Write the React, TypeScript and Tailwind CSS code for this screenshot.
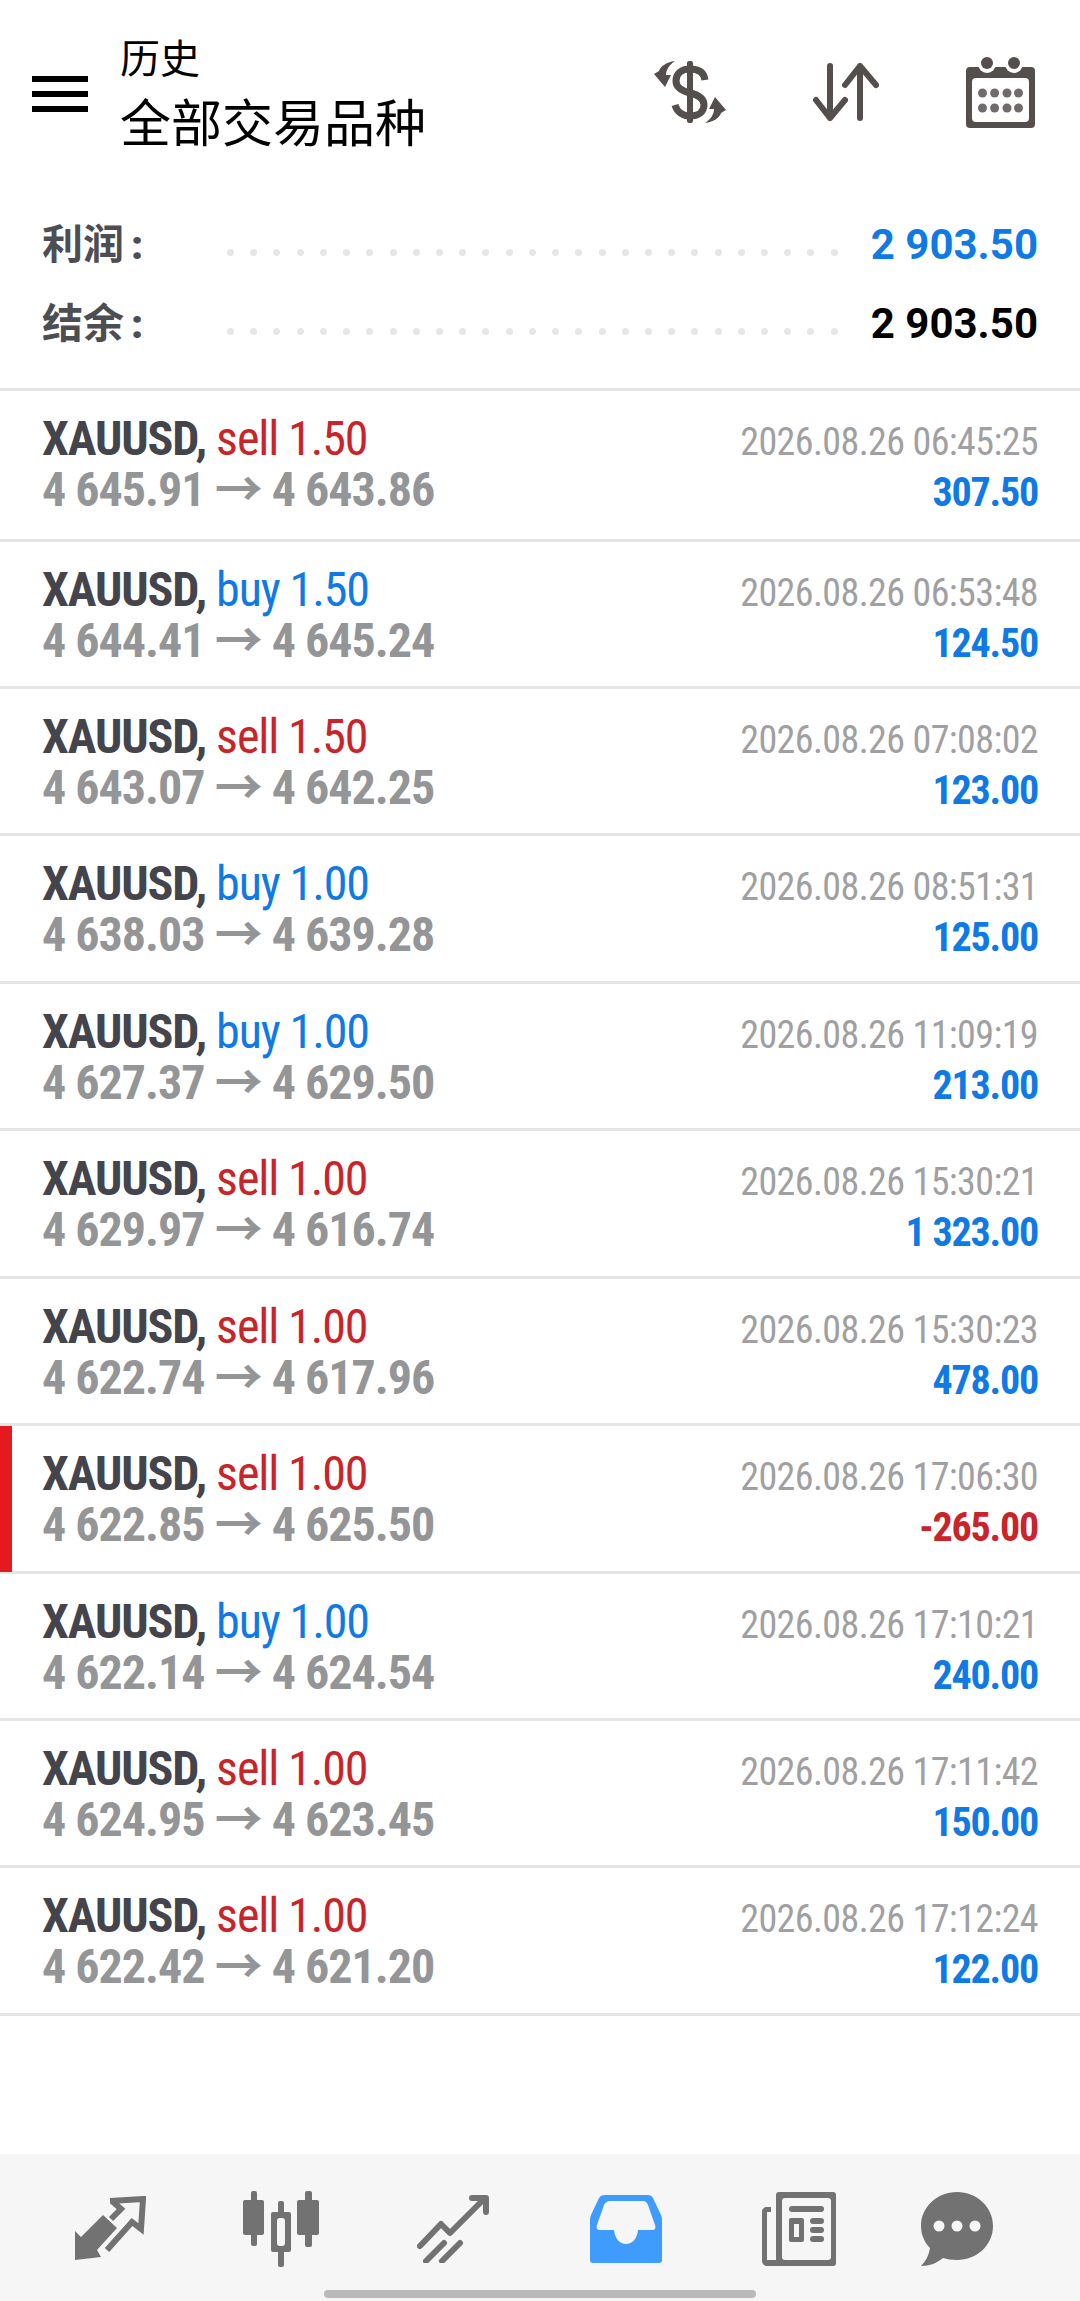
import React from 'react';

const trades = [
  ['sell 1.50', '4 645.91', '4 643.86', '2026.08.26 06:45:25', '307.50'],
  ['buy 1.50', '4 644.41', '4 645.24', '2026.08.26 06:53:48', '124.50'],
  ['sell 1.50', '4 643.07', '4 642.25', '2026.08.26 07:08:02', '123.00'],
  ['buy 1.00', '4 638.03', '4 639.28', '2026.08.26 08:51:31', '125.00'],
  ['buy 1.00', '4 627.37', '4 629.50', '2026.08.26 11:09:19', '213.00'],
  ['sell 1.00', '4 629.97', '4 616.74', '2026.08.26 15:30:21', '1 323.00'],
  ['sell 1.00', '4 622.74', '4 617.96', '2026.08.26 15:30:23', '478.00'],
  ['sell 1.00', '4 622.85', '4 625.50', '2026.08.26 17:06:30', '-265.00'],
  ['buy 1.00', '4 622.14', '4 624.54', '2026.08.26 17:10:21', '240.00'],
  ['sell 1.00', '4 624.95', '4 623.45', '2026.08.26 17:11:42', '150.00'],
  ['sell 1.00', '4 622.42', '4 621.20', '2026.08.26 17:12:24', '122.00'],
];

const SummaryRow: React.FC<{ label: string; value: string; color: string }> = ({ label, value, color }) => (
  <div className="flex items-start h-[79px]">
    <span className="w-[185px] text-[41px] leading-[50px] font-bold text-[#4d4e53] whitespace-pre">
      {label}<span className="ml-[7px] font-black">:</span>
    </span>
    <div className="flex-1 flex justify-between mt-[29px] mr-[33px]">
      {Array.from({ length: 27 }).map((_, i) => (
        <span key={i} className="w-[7px] h-[7px] rounded-full bg-[#e6e6e6]" />
      ))}
    </div>
    <span className={`text-[42px] leading-[50px] font-bold [font-stretch:90%] whitespace-pre ${color}`}>{value}</span>
  </div>
);

const Row: React.FC<{ t: string[]; first: boolean }> = ({ t, first }) => {
  const isSell = t[0].startsWith('sell');
  const loss = t[4].startsWith('-');
  return (
    <div className={`relative border-b-[3px] border-[#e5e5e5] px-[42px] flex justify-between ${first ? 'h-[150.5px]' : 'h-[147.45px]'}`}>
      {loss && <div className="absolute left-0 top-0 bottom-[-1px] w-[12px] bg-[#e31b1f]" />}
      <div className="pt-[22px]">
        <div className="text-[48px] leading-[51px] tracking-[-1.1px] [font-stretch:75%] whitespace-pre">
          <span className="font-bold text-[#44454c]">XAUUSD, </span>
          <span className={isSell ? 'text-[#c9242a]' : 'text-[#0f7ae6]'}>{t[0]}</span>
        </div>
        <div className="text-[48px] leading-[51px] tracking-[-1px] font-bold text-[#949597] [font-stretch:75%] whitespace-pre">
          {t[1]} → {t[2]}
        </div>
      </div>
      <div className="pt-[29px] text-right">
        <div className="text-[38px] leading-[44px] tracking-[-0.6px] text-[#a0a0a2] [font-stretch:75%] whitespace-pre">{t[3]}</div>
        <div className={`text-[40px] leading-[58px] tracking-[-1.2px] font-bold [font-stretch:75%] whitespace-pre ${loss ? 'text-[#c9242a]' : 'text-[#0f7ae6]'}`}>{t[4]}</div>
      </div>
    </div>
  );
};

export default function App() {
  return (
    <div className="relative w-[1080px] h-[2301px] bg-white overflow-hidden flex flex-col font-['Roboto','Noto_Sans_CJK_SC',sans-serif]">
      <header className="h-[162px] flex items-center pl-[32px] pr-[45px] pt-[28px]">
        <div className="flex flex-col gap-[9px] w-[56px] mt-[-3px]">
          <span className="h-[6px] bg-black" />
          <span className="h-[6px] bg-black" />
          <span className="h-[6px] bg-black" />
        </div>
        <div className="ml-[32px] flex-1 mt-[14px]">
          <div className="text-[40px] leading-[46px] text-black">历史</div>
          <div className="text-[51px] leading-[84px] text-black">全部交易品种</div>
        </div>
        <div className="flex items-center gap-[87px] mt-[-6px]">
          <svg width="72" height="64" viewBox="0 0 72 64" fill="#544f4d">
            <rect x="33" y="1" width="6" height="62" rx="2" />
            <path d="M51 20C50 12 44 9 36 9C27 9 22 14 22 21C22 28 28 31 36 33C45 35 50 39 50 45C50 52 44 56 36 56C29 56 23 52 21 45" fill="none" stroke="#544f4d" strokeWidth="7" />
            <path d="M21 1C12 2 6 7 5 11L0 14L11 27L17 15L12 15C12 10 15 5 21 1Z" />
            <path d="M51 63C60 62 66 57 67 53L72 50L61 37L55 49L60 49C60 54 57 59 51 63Z" />
          </svg>
          <svg width="66" height="58" viewBox="0 0 66 58" fill="none" stroke="#544f4d" strokeWidth="6" strokeLinecap="round" strokeLinejoin="round">
            <path d="M17 3v52M3 37l14 18 15-18" />
            <path d="M47 55V3M32 22L47 3l16 19" />
          </svg>
          <svg width="69" height="71" viewBox="0 0 69 71">
            <rect x="0" y="10" width="69" height="61" rx="4" fill="#544f4d" />
            <circle cx="21" cy="7" r="9" fill="#fff" />
            <circle cx="48" cy="7" r="9" fill="#fff" />
            <circle cx="21" cy="6" r="6" fill="#544f4d" />
            <circle cx="48" cy="6" r="6" fill="#544f4d" />
            <rect x="6" y="21" width="57" height="44" rx="4" fill="#fff" />
            {[36, 51].map(y => [16.5, 28.6, 41, 52.5].map(x => (
              <circle key={`${x}-${y}`} cx={x} cy={y} r="4.5" fill="#6f6b6a" />
            )))}
          </svg>
        </div>
      </header>

      <section className="h-[229px] border-b-[3px] border-[#e5e5e5] px-[42px] pt-[58px]">
        <SummaryRow label="利润" value="2 903.50" color="text-[#0f7ae6]" />
        <SummaryRow label="结余" value="2 903.50" color="text-black" />
      </section>

      <main className="flex-1">
        {trades.map((t, i) => <Row key={i} t={t} first={i === 0} />)}
      </main>

      <footer className="relative h-[147px] bg-[#f6f6f6] flex items-center pt-[3px] pl-[74px]">
        <svg width="72" height="66" viewBox="0 0 72 66" fill="#727272">
          <path d="M1 35V64L27 61L23 54L43 32L29 19L7 41Z" />
          <path d="M36 5L69 3L67 33L58 26L33 54M38 5L47 13L37 23" fill="none" stroke="#727272" strokeWidth="6" />
        </svg>
        <svg className="ml-[97px]" width="76" height="76" viewBox="0 0 76 76" fill="#727272">
          <rect x="8" y="0" width="6" height="55" rx="2" />
          <rect x="0" y="9" width="21" height="35" rx="2" />
          <rect x="62" y="0" width="7" height="56" rx="2" />
          <rect x="54" y="9" width="22" height="35" rx="2" />
          <rect x="35" y="10" width="6" height="66" rx="2" />
          <rect x="28" y="21" width="20" height="40" rx="2" />
          <rect x="34" y="27" width="8" height="28" rx="3" fill="#f6f6f6" />
        </svg>
        <svg className="ml-[98px]" width="72" height="68" viewBox="0 0 72 68" fill="none" stroke="#727272" strokeWidth="6" strokeLinecap="round" strokeLinejoin="round">
          <path d="M3 51L24 29L33 38L67 4M55 3H69V17" />
          <path d="M9 66L27 48M25 66L43 48" />
        </svg>
        <svg className="ml-[101px]" width="72" height="68" viewBox="0 0 72 68">
          <path d="M15 0H58C60 0 62 1 63 3L71 20C72 22 72 24 72 26V65C72 67 71 68 69 68H3C1 68 0 67 0 65V26C0 24 0 22 1 20L9 3C10 1 12 0 15 0Z" fill="#409cfc" />
          <path d="M20 6H53C56 6 57 8 58 10L65 30C66 33 65 35 62 35H48C47 44 42 49 36 49C30 49 25 44 24 35H10C7 35 6 33 7 30L14 10C15 8 17 6 20 6Z" fill="#f6f6f6" />
        </svg>
        <svg className="ml-[100px]" width="74" height="74" viewBox="0 0 74 74" fill="#727272">
          <path d="M17 0H71C73 0 74 1 74 3V71C74 73 73 74 71 74H6C2 74 0 72 0 68V20C0 17 2 15 5 15H9V20H5V68H14V3C14 1 15 0 17 0Z" />
          <rect x="20" y="6" width="49" height="62" rx="3" fill="#f6f6f6" />
          <rect x="27" y="14" width="35" height="6" rx="3" />
          <rect x="27" y="26" width="15" height="24" rx="2" />
          <rect x="32" y="32" width="5" height="13" fill="#f6f6f6" />
          <rect x="48" y="26" width="14" height="6" rx="3" />
          <rect x="48" y="35" width="14" height="6" rx="3" />
          <rect x="48" y="44" width="14" height="6" rx="3" />
        </svg>
        <svg className="ml-[85px]" width="72" height="74" viewBox="0 0 72 74">
          <path d="M36 0C56 0 72 15 72 34S56 68 36 68C30 68 26 67 22 66C16 71 9 74 0 74C5 69 8 63 9 56C3 50 0 42 0 34C0 15 16 0 36 0Z" fill="#727272" />
          <circle cx="18" cy="34" r="5.5" fill="#f6f6f6" />
          <circle cx="36" cy="34" r="5.5" fill="#f6f6f6" />
          <circle cx="54" cy="34" r="5.5" fill="#f6f6f6" />
        </svg>
        <div className="absolute left-[324px] bottom-[3px] w-[432px] h-[8px] rounded-full bg-[#bababa]" />
      </footer>
    </div>
  );
}
